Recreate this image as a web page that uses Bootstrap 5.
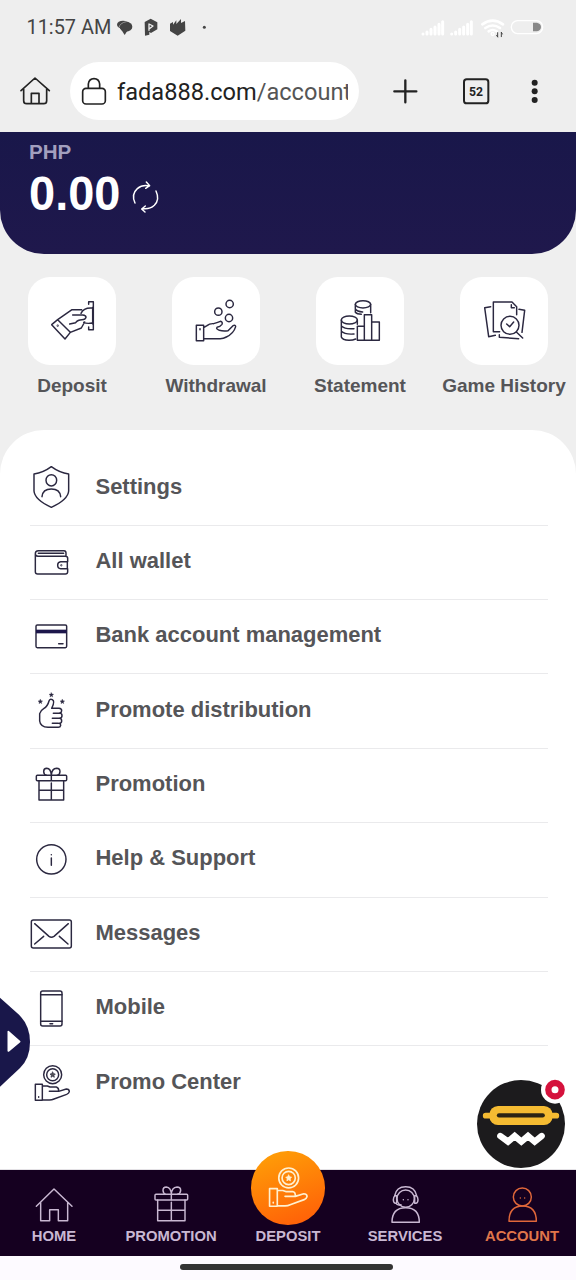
<!DOCTYPE html>
<html lang="en">
<head>
<meta charset="utf-8">
<meta name="viewport" content="width=device-width, initial-scale=1">
<title>Account</title>
<link href="https://cdn.jsdelivr.net/npm/bootstrap@5.3.0/dist/css/bootstrap.min.css" rel="stylesheet">
<style>
  body { font-family: "Liberation Sans", Arial, sans-serif; background: #efefef; color: #555558; }
  svg { display: block; flex: none; fill: none; stroke-linecap: round; stroke-linejoin: round; }
  .screen { width: 576px; height: 1280px; overflow: hidden; }
  .browser { height: 132px; background: #eeeeee; font-family: Roboto, sans-serif; color: #222; }
  .status { height: 55px; padding-left: 26.5px; padding-right: 28px; font-size: 19.9px; color: #444; }
  .address { height: 74px; padding-left: 14px; padding-right: 22px; padding-bottom: 2px; }
  .url { width: 289px; height: 58px; margin-left: 14px; padding-left: 9px; font-size: 23.6px; color: #222; }
  .url-text { width: 230.5px; overflow: hidden; white-space: nowrap; padding-top: 3px; }
  .path { color: #555; }
  .balance { height: 121.5px; padding: 7px 29px 0; border-radius: 0 0 44px 44px; background: linear-gradient(#19174a, #1f184c); }
  .currency { font-size: 20.6px; line-height: 25px; color: #a29fbe; }
  .amount { font-size: 47px; line-height: 58px; transform: scaleY(1.04); }
  .shortcuts { padding-top: 23.5px; height: 176.5px; }
  .tile { width: 88px; height: 88px; border-radius: 22px; }
  .tile-label { font-size: 19px; line-height: 24px; margin-top: 9px; white-space: nowrap; }
  .ink { stroke: #2b2840; stroke-width: 4.4; }
  .panel { padding: 21.3px 28.5px 0 30px; border-radius: 44px 44px 0 0; }
  .entry { height: 74.4px; font-size: 21.97px; gap: 21.5px; border-bottom: 1px solid #eaeaec; padding-bottom: 2px; }
  .entry:last-child { border: 0; }
  .entry svg { margin-left: -2px; margin-top: 1px; }
  .tabs { height: 86px; background: #150020; margin: 0; padding-top: 12px; box-shadow: 0 0 1px #5d5065; }
  .tabs .tab { flex: 0 0 117px; font-size: 14.8px; line-height: 18px; color: #c9b8d2; }
  .tabs .line { stroke: #c9b8d2; stroke-width: 4.4; margin-bottom: 1px; }
  .tabs .active { color: #e0764a; }
  .tabs .active .line { stroke: #e0673a; }
  .coin { width: 73.5px; height: 73.5px; margin-top: -31px; margin-bottom: 2px; background: linear-gradient(160deg, #ffa307, #ff5a08); }
  .gesture { height: 24px; background: #fdfaff; }
  .gesture-bar { width: 213px; height: 5.5px; background: #333; margin-left: -4px; margin-top: -2px; }
  .drawer { left: 0; top: 995px; }
  .chat { left: 476px; top: 1074px; }
</style>
</head>
<body>
<main class="screen position-relative d-flex flex-column mx-auto">
  <header class="browser">
    <div class="status d-flex align-items-center">
      <span>11:57 AM</span>
      <svg width="100" height="26" viewBox="334 44 300 78">
        <g fill="#444"><ellipse cx="370" cy="73" rx="18" ry="12"/><path d="M362 84l13 20 10-16z"/><ellipse cx="379" cy="79" rx="19" ry="15"/><path d="M358 81q3-14 22-17" fill="none" stroke="#bbb" stroke-width="2"/>
        <path d="M435 65l18-10 20 11v21l-19 11-5-3v8l-13 3z"/><path d="M511 70l9-5v8l10-13v11l14-15v12l12-6 1 29-23 15-23-14z"/><circle cx="614" cy="81" r="4.5"/></g>
        <path d="M448 90V71l12 6-9 7" stroke="#eee" stroke-width="4"/>
      </svg>
      <svg class="ms-auto" width="132" height="26" viewBox="384 44 396 78">
        <g stroke="#fff" stroke-width="9"><path d="M405 101v0M417 101v-6M429 101v-14M441 101V80M453 101V72M464 101V64"/><path d="M491 101v0M503 101v-6M515 101v-14M527 101V80M539 101V72M550 101V64"/>
        <path d="M583 72q31-22 62 0M592 83q22-15 44 0M602 93q12-8 24 0" stroke-width="8"/><circle cx="614" cy="101" r="2"/></g>
        <path d="M629 97v12m-3-4 3 5M640 109V97m3 4-3-5" stroke="#444" stroke-width="3"/>
        <rect x="670" y="61" width="94" height="39" rx="19" stroke="#fff" stroke-width="4"/><path d="M735 67h12q12 3 12 13t-12 13h-12z" fill="#888"/>
      </svg>
    </div>
    <div class="address d-flex align-items-center">
      <svg width="42" height="42" viewBox="42 211 126 126" stroke="#222" stroke-width="5"><path d="M63 273l42-38 43 38M71 266v37q0 9 9 9h51q9 0 9-9v-37M94 311v-30h23v30"/></svg>
      <div class="url bg-white rounded-pill d-flex align-items-center">
        <svg width="30" height="34" viewBox="237 222 90 102" stroke="#222" stroke-width="5"><rect x="248" y="265" width="68" height="47" rx="10"/><path d="M265 264v-12q2-16 17-16t17 16v12"/></svg>
        <div class="url-text ms-2">fada888.com<span class="path">/account</span></div>
      </div>
      <svg class="ms-auto" width="168" height="42" viewBox="295 209 504 126"><path d="M353 240v66M320 273h66" stroke="#222" stroke-width="7"/><rect x="529" y="237" width="73" height="72" rx="8" stroke="#222" stroke-width="6"/><text x="565" y="287" text-anchor="middle" font-size="40" font-weight="700" textLength="42" lengthAdjust="spacingAndGlyphs" fill="#222">52</text><g fill="#222"><circle cx="741" cy="247" r="9"/><circle cx="741" cy="273" r="9"/><circle cx="741" cy="299" r="9"/></g></svg>
    </div>
  </header>

  <section class="balance text-white fw-bold">
    <div class="currency">PHP</div>
    <div class="d-flex align-items-center">
      <span class="amount">0.00</span>
      <svg class="ms-2 mt-2" width="36" height="38" viewBox="384 148 108 114" stroke="#fff" stroke-width="4.4"><path d="M405 223q-12-26 7-43 15-13 36-8M439 160l10 11-12 8M468 187q12 26-5 43-14 13-35 10M436 232l-11 9 10 9"/></svg>
    </div>
  </section>

  <section class="shortcuts row g-0 fw-bold">
    <div class="col-3 d-flex flex-column align-items-center">
      <div class="tile bg-white"><svg class="ink" width="88" height="88" viewBox="84 51 264 264"><path d="M266 133v-8h14v84h-14v-8M278 142v50M155 194l18-15 38 38-16 20zM173 179l43-30h29M211 217l33-13 10-18M218 165h30q10 1 10 7-2 7-12 7-13 0-19 9l-18 4M243 160q8-18 34-16M251 187q9 5 25 2"/><circle cx="173" cy="197" r="1"/></svg></div>
      <div class="tile-label">Deposit</div>
    </div>
    <div class="col-3 d-flex flex-column align-items-center">
      <div class="tile bg-white"><svg class="ink" width="88" height="88" viewBox="516 51 264 264"><circle cx="689" cy="132" r="11"/><circle cx="655" cy="155" r="11"/><circle cx="687" cy="174" r="11"/><path d="M589 196h22v46h-22zM611 203l10-6q8-7 20-6 14-4 20-7 8 2 5 9-5 7-15 9-4 5 7 9 12 3 26 1l15-15q8-3 8 3-6 21-28 31-10 6-22 5h-46"/><path d="M600 206v3"/></svg></div>
      <div class="tile-label">Withdrawal</div>
    </div>
    <div class="col-3 d-flex flex-column align-items-center">
      <div class="tile bg-white"><svg class="ink" width="88" height="88" viewBox="84 51 264 264"><ellipse cx="225" cy="133" rx="23" ry="11"/><path d="M202 133v24q5 6 18 6M248 133v25M202 147q5 8 22 9"/><ellipse cx="184" cy="180" rx="24" ry="12"/><path d="M160 180v51q3 9 23 10 12 0 20-4M208 180v13M160 198q10 10 38 8M160 214q10 10 38 8M208 241v-42h21v42zM229 241v-77h22v77zM251 241v-55h23v55z"/></svg></div>
      <div class="tile-label">Statement</div>
    </div>
    <div class="col-3 d-flex flex-column align-items-center">
      <div class="tile bg-white"><svg class="ink" width="88" height="88" viewBox="516 51 264 264"><path d="M635 215h-19v-89h56l14 14v24M670 134v9h9M608 140l-18 3 12 87 20-4M693 148l17 3-8 66M634 224v8l58 4"/><circle cx="666" cy="196" r="27"/><path d="M685 216l19 18M656 192l9 8 12-14"/></svg></div>
      <div class="tile-label">Game History</div>
    </div>
  </section>

  <section class="panel bg-white flex-grow-1 fw-bold">
    <div class="entry d-flex align-items-center"><svg class="ink" width="46" height="50" viewBox="84 112 138 150"><path d="M154 126q24 18 52 22v51q-2 26-52 49-50-23-52-49v-51q28-4 52-22z"/><ellipse cx="154" cy="167" rx="16" ry="17"/><path d="M126 216q2-23 28-23t28 23"/></svg><span>Settings</span></div>
    <div class="entry d-flex align-items-center"><svg class="ink" width="46" height="50" viewBox="84 335 138 150"><path d="M203 409v-10q0-6-7-6h-82q-8-1-8-8v54q0 7 7 7h83q7 0 7-7v-9M106 385q0-9 9-9h77q6 0 6 7v10M115 384h76M202 409h-20q-9 1-9 10 0 11 9 11h20z"/><circle cx="184" cy="420" r="1"/></svg><span>All wallet</span></div>
    <div class="entry d-flex align-items-center"><svg class="ink" width="46" height="50" viewBox="84 558 138 150"><rect x="108" y="600" width="92" height="68" rx="4"/><path d="M108 614h92v11h-92z" fill="#1c164b" stroke="none"/><path d="M176 656h13"/></svg><span>Bank account management</span></div>
    <div class="entry d-flex align-items-center"><svg class="ink" width="46" height="50" viewBox="84 61 138 150"><path d="M119 144q2-9 12-15 12-7 16-23 3-8 10-4 9 5-2 26h22q8 1 8 7t-6 7q7 1 7 8t-7 8q6 1 6 8t-7 7q4 1 4 6-1 6-7 6h-31q-23-1-25-19zM160 143h19M157 158h21M157 173h18"/><g fill="#2b2840" stroke-width="1"><path id="st" d="M154 81l2 4 5 1-4 3 1 5-4-3-4 3 1-5-4-3 5-1z"/><use href="#st" x="-33" y="20"/><use href="#st" x="33" y="20"/></g></svg><span>Promote distribution</span></div>
    <div class="entry d-flex align-items-center"><svg class="ink" width="46" height="50" viewBox="84 285 138 150"><rect x="109" y="331" width="91" height="16" rx="3"/><path d="M117 347v58h74v-58M154 354v51M117 376h74M154 331q-1-20-14-21-9 0-9 10 1 10 8 11M154 331q1-20 16-21 10 0 10 10-1 10-8 11M154 331v15"/></svg><span>Promotion</span></div>
    <div class="entry d-flex align-items-center"><svg class="ink" width="46" height="50" viewBox="84 508 138 150"><circle cx="154" cy="584" r="44"/><path d="M154 580v22M154 570v0"/></svg><span>Help &amp; Support</span></div>
    <div class="entry d-flex align-items-center"><svg class="ink" width="46" height="50" viewBox="84 71 138 150"><rect x="94" y="104" width="120" height="84" rx="6"/><path d="M104 115l43 38q7 5 15 0l43-38M104 176l27-23M204 176l-26-23"/></svg><span>Messages</span></div>
    <div class="entry d-flex align-items-center"><svg class="ink" width="46" height="50" viewBox="84 294 138 150"><rect x="122" y="318" width="64" height="105" rx="6"/><path d="M122 329h64M122 409h64M150 416h8"/></svg><span>Mobile</span></div>
    <div class="entry d-flex align-items-center"><svg class="ink" width="46" height="50" viewBox="84 517 138 150"><g id="hand"><circle cx="158" cy="567" r="27"/><circle cx="158" cy="567" r="18"/><path d="M158 559l3 5 5 1-4 4 1 6-5-3-5 3 1-6-4-4 5-1z" fill="currentColor" stroke-width="2"/><path d="M106 596h21v48h-21zM127 601h15l8 3h19q8 2 7 13h-28M176 617l23-7q9 0 9 8-1 5-8 8l-38 14q-6 3-14 3h-21M116 633v2"/></g></svg><span>Promo Center</span></div>
  </section>

  <nav class="tabs d-flex justify-content-center fw-bold">
    <div class="tab d-flex flex-column align-items-center"><svg class="line" width="48" height="44" viewBox="90 126 144 132"><path d="M109 199l53-52 54 52M122 188v54h27v-33h26v33h28v-54"/></svg>HOME</div>
    <div class="tab d-flex flex-column align-items-center"><svg class="line" width="48" height="44" viewBox="441 126 144 132"><rect x="465" y="163" width="98" height="17" rx="3"/><path d="M473 180v62h82v-62M514 187v55M473 211h82M514 163q-1-21-15-22-10 0-10 10 1 10 8 12M514 163q1-21 17-22 11 0 11 10-1 10-9 12M514 163v16"/></svg>PROMOTION</div>
    <div class="tab d-flex flex-column align-items-center"><div class="coin rounded-circle"><svg width="73.5" height="73.5" viewBox="96 33 220 220" stroke="#fff0d0" stroke-width="4.5" style="color:#fff0d0"><use href="#hand" transform="translate(35 -510) scale(1.1)"/></svg></div>DEPOSIT</div>
    <div class="tab d-flex flex-column align-items-center"><svg class="line" width="48" height="44" viewBox="483 126 144 132"><circle cx="557" cy="176" r="26"/><path d="M524 167q5-27 33-27t33 27M526 167q-6 3-6 12t6 11h4v-23zM588 167q6 3 6 12t-6 11h-4v-23zM528 190q3 7 15 4M516 247q0-44 41-44t41 44zM550 179v0M564 179v0" /></svg>SERVICES</div>
    <div class="tab active d-flex flex-column align-items-center"><svg class="line" width="48" height="44" viewBox="294 66 144 132"><circle cx="367" cy="111" r="27"/><path d="M327 184q0-46 41-46t41 46zM361 114v0M374 114v0"/></svg>ACCOUNT</div>
  </nav>
  <footer class="gesture d-flex align-items-center justify-content-center"><div class="gesture-bar rounded-pill"></div></footer>

  <svg class="drawer position-absolute" width="32" height="94" viewBox="0 330 96 282"><path d="M0 338l57 51q33 33 33 82t-30 78L0 605z" fill="#19174a"/><path d="M25 440v58l34-28z" fill="#fff" stroke="#fff" stroke-width="5"/></svg>
  <svg class="chat position-absolute" width="92" height="96" viewBox="108 42 276 288"><circle cx="243" cy="192" r="132" fill="#1c1b1d"/><circle cx="345" cy="89" r="42" fill="#fff"/><circle cx="345" cy="89" r="20" stroke="#d5123c" stroke-width="19"/><path d="M137 167h212" stroke="#f5bb32" stroke-width="17"/><rect x="148" y="138" width="190" height="57" rx="26" fill="#f5bb32"/><path d="M177 166h131" stroke="#2c2414" stroke-width="13"/><path d="M181 228l23 17 20-17 20 17 20-17 20 17 21-17" stroke="#fff" stroke-width="19" stroke-linejoin="miter"/></svg>
</main>
<script src="https://cdn.jsdelivr.net/npm/bootstrap@5.3.0/dist/js/bootstrap.bundle.min.js"></script>
</body>
</html>
